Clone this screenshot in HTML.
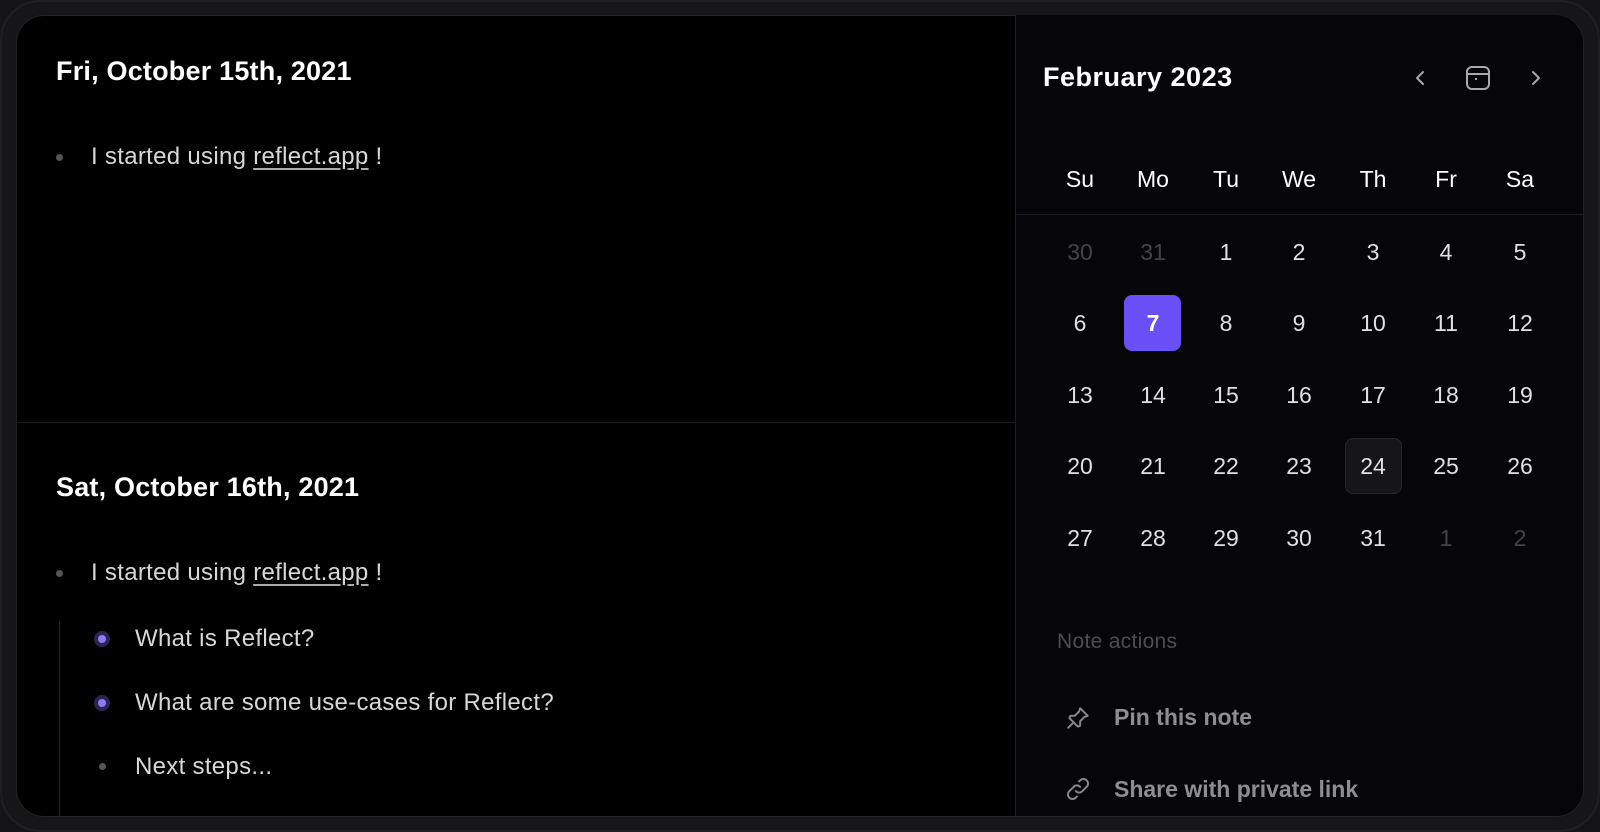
<!DOCTYPE html>
<html><head><meta charset="utf-8"><style>
*{margin:0;padding:0;box-sizing:border-box}
body{width:1600px;height:832px;background:#141416;font-family:"Liberation Sans",sans-serif;overflow:hidden;position:relative}
.outer{position:absolute;left:0;top:0;width:1600px;height:832px;border-radius:40px;background:#161618;border:2px solid #202022}
.inner{position:absolute;left:16px;top:15px;width:1568px;height:802px;border-radius:28px;background:#000;overflow:hidden;border:1px solid #222}
.right{position:absolute;left:999px;top:0;width:569px;height:802px;background:#060609;border-left:1px solid #1e1e22}
.hdiv{position:absolute;left:0;top:406px;width:999px;height:1px;background:#1e1e22}
.t{position:absolute;white-space:nowrap}
h1{position:absolute;font-size:27px;font-weight:bold;color:#fff;white-space:nowrap;letter-spacing:0.2px}
.b{font-size:24px;color:#d8d8d8;letter-spacing:0.3px}
.b u{text-decoration:underline;text-underline-offset:4px;text-decoration-color:#aaa}
.dot{position:absolute;width:7px;height:7px;border-radius:50%;background:#555}
.pdot{position:absolute;width:16px;height:16px;border-radius:50%;background:#2c2450}
.pdot:after{content:"";position:absolute;left:4px;top:4px;width:8px;height:8px;border-radius:50%;background:#8d7bff}
.c{position:absolute;width:60px;text-align:center;font-size:23px;color:#e0e0e0;transform:translate(-30px,-13px)}
.w{font-size:23px;color:#fff;font-weight:500}
.g{color:#444}
</style></head><body>
<div class="outer"></div>
<div class="inner">
<h1 style="left:39px;top:40px">Fri, October 15th, 2021</h1>
<div class="dot" style="left:39px;top:138px"></div>
<div class="t b" style="left:74px;top:127px">I started using <u>reflect.app</u> !</div>
<div class="hdiv"></div>
<h1 style="left:39px;top:456px">Sat, October 16th, 2021</h1>
<div class="dot" style="left:39px;top:554px"></div>
<div class="t b" style="left:74px;top:543px">I started using <u>reflect.app</u> !</div>
<div style="position:absolute;left:42px;top:605px;width:1px;height:200px;background:#222"></div>
<div class="pdot" style="left:77px;top:615px"></div>
<div class="t b" style="left:118px;top:609px">What is Reflect?</div>
<div class="pdot" style="left:77px;top:679px"></div>
<div class="t b" style="left:118px;top:673px">What are some use-cases for Reflect?</div>
<div class="dot" style="left:82px;top:747px"></div>
<div class="t b" style="left:118px;top:737px">Next steps...</div>
</div>
<div style="position:absolute;left:1015px;top:15px;width:568px;height:801px;">
<div class="right" style="left:0;top:0;width:568px;height:801px;border-radius:0 28px 28px 0"></div>
</div>
<h1 style="left:1043px;top:62px;letter-spacing:0.5px">February 2023</h1>
<svg style="position:absolute;left:1408px;top:66px" width="24" height="24" viewBox="0 0 24 24" fill="none" stroke="#aaa" stroke-width="2" stroke-linecap="round" stroke-linejoin="round"><path d="M15 6l-6 6 6 6"/></svg>
<svg style="position:absolute;left:1465px;top:65px" width="26" height="26" viewBox="0 0 26 26" fill="none" stroke="#aaa" stroke-width="2"><rect x="2" y="2" width="22" height="22" rx="5"/><path d="M2 9h22"/><rect x="10" y="13" width="2" height="2" fill="#aaa" stroke="none"/></svg>
<svg style="position:absolute;left:1524px;top:66px" width="24" height="24" viewBox="0 0 24 24" fill="none" stroke="#aaa" stroke-width="2" stroke-linecap="round" stroke-linejoin="round"><path d="M9 6l6 6-6 6"/></svg>
<div style="position:absolute;left:1015px;top:214px;width:569px;height:1px;background:#1e1e22"></div>
<div style="position:absolute;left:1124px;top:295px;width:57px;height:56px;border-radius:8px;background:#6a4ff7"></div>
<div style="position:absolute;left:1345px;top:438px;width:57px;height:56px;border-radius:8px;background:#161618;border:1px solid #26262a"></div>
<div class="c w" style="left:1080px;top:179px">Su</div><div class="c w" style="left:1153px;top:179px">Mo</div><div class="c w" style="left:1226px;top:179px">Tu</div><div class="c w" style="left:1299px;top:179px">We</div><div class="c w" style="left:1373px;top:179px">Th</div><div class="c w" style="left:1446px;top:179px">Fr</div><div class="c w" style="left:1520px;top:179px">Sa</div>
<div class="c g" style="left:1080px;top:252px">30</div><div class="c g" style="left:1153px;top:252px">31</div><div class="c" style="left:1226px;top:252px">1</div><div class="c" style="left:1299px;top:252px">2</div><div class="c" style="left:1373px;top:252px">3</div><div class="c" style="left:1446px;top:252px">4</div><div class="c" style="left:1520px;top:252px">5</div>
<div class="c" style="left:1080px;top:323px">6</div><div class="c" style="left:1153px;top:323px;color:#fff;font-weight:bold">7</div><div class="c" style="left:1226px;top:323px">8</div><div class="c" style="left:1299px;top:323px">9</div><div class="c" style="left:1373px;top:323px">10</div><div class="c" style="left:1446px;top:323px">11</div><div class="c" style="left:1520px;top:323px">12</div>
<div class="c" style="left:1080px;top:395px">13</div><div class="c" style="left:1153px;top:395px">14</div><div class="c" style="left:1226px;top:395px">15</div><div class="c" style="left:1299px;top:395px">16</div><div class="c" style="left:1373px;top:395px">17</div><div class="c" style="left:1446px;top:395px">18</div><div class="c" style="left:1520px;top:395px">19</div>
<div class="c" style="left:1080px;top:466px">20</div><div class="c" style="left:1153px;top:466px">21</div><div class="c" style="left:1226px;top:466px">22</div><div class="c" style="left:1299px;top:466px">23</div><div class="c" style="left:1373px;top:466px">24</div><div class="c" style="left:1446px;top:466px">25</div><div class="c" style="left:1520px;top:466px">26</div>
<div class="c" style="left:1080px;top:538px">27</div><div class="c" style="left:1153px;top:538px">28</div><div class="c" style="left:1226px;top:538px">29</div><div class="c" style="left:1299px;top:538px">30</div><div class="c" style="left:1373px;top:538px">31</div><div class="c g" style="left:1446px;top:538px">1</div><div class="c g" style="left:1520px;top:538px">2</div>
<div class="t" style="left:1057px;top:630px;font-size:21px;color:#4e4e52;letter-spacing:0.3px">Note actions</div>
<svg style="position:absolute;left:1065px;top:705px" width="26" height="26" viewBox="0 0 24 24" fill="none" stroke="#888" stroke-width="1.8" stroke-linecap="round" stroke-linejoin="round"><path d="M14 3l7 7-3 1-4 4 0 4-2 1-8-8 1-2h4l4-4z"/><path d="M8 16l-5 5"/></svg>
<div class="t" style="left:1114px;top:704px;font-size:23px;font-weight:bold;color:#8e8e92">Pin this note</div>
<svg style="position:absolute;left:1065px;top:776px" width="26" height="26" viewBox="0 0 24 24" fill="none" stroke="#888" stroke-width="1.8" stroke-linecap="round"><path d="M10 14a4 4 0 0 0 6 0l4-4a4 4 0 0 0-6-6l-1 1"/><path d="M14 10a4 4 0 0 0-6 0l-4 4a4 4 0 0 0 6 6l1-1"/></svg>
<div class="t" style="left:1114px;top:776px;font-size:23px;font-weight:bold;color:#8e8e92">Share with private link</div>
</body></html>
